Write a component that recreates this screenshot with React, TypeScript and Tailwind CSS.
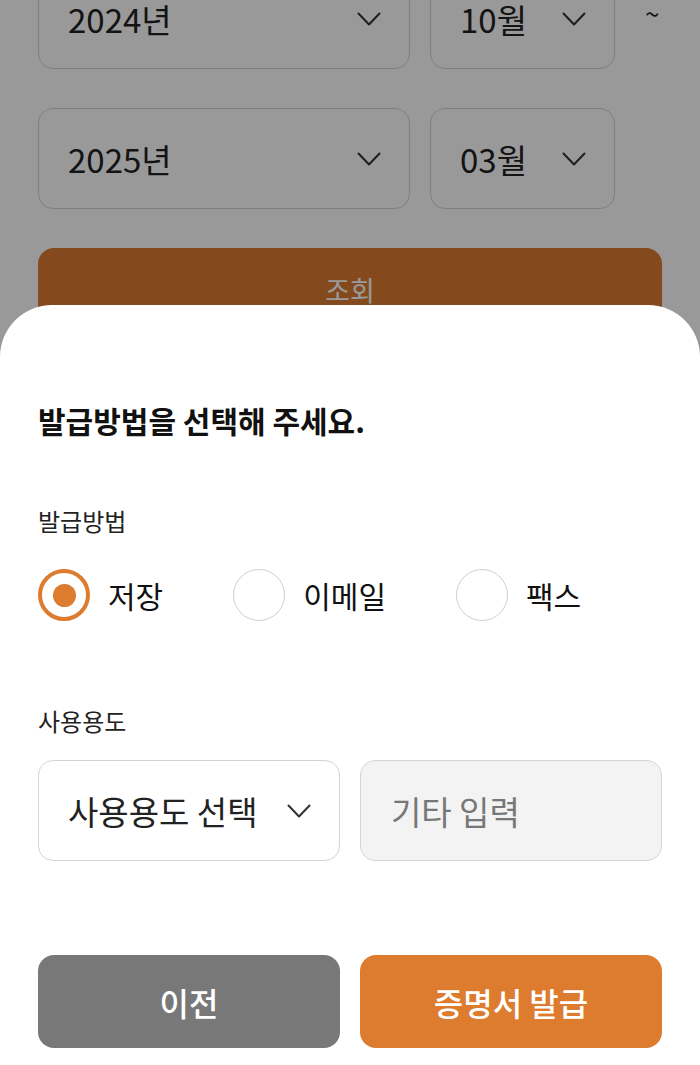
import { useState } from "react";

function Chevron({ className = "" }: { className?: string }) {
  return (
    <svg
      width="24"
      height="14"
      viewBox="0 0 24 14"
      fill="none"
      stroke="currentColor"
      strokeWidth="2"
      strokeLinecap="round"
      strokeLinejoin="round"
      className={className}
    >
      <polyline points="1.5,1.5 12,12.5 22.5,1.5" />
    </svg>
  );
}

function SelectBox({ label, className = "" }: { label: string; className?: string }) {
  return (
    <div
      className={`flex items-center justify-between rounded-[15px] border-[1.5px] border-[#d4d4d4] bg-white pl-[29px] pr-[28px] ${className}`}
    >
      <span className="text-[33px] leading-[34px] text-[#222]">{label}</span>
      <Chevron className="text-[#333]" />
    </div>
  );
}

function Radio({ label, checked, onClick }: { label: string; checked: boolean; onClick: () => void }) {
  return (
    <button type="button" onClick={onClick} className="flex items-center gap-[18px]">
      {checked ? (
        <span className="flex h-[52px] w-[52px] items-center justify-center rounded-full border-4 border-[#dd7b2f] bg-white">
          <span className="h-[23px] w-[23px] rounded-full bg-[#dd7b2f]" />
        </span>
      ) : (
        <span className="h-[52px] w-[52px] rounded-full border-[1.5px] border-[#cfcfcf] bg-white" />
      )}
      <span className="text-[30px] leading-[36px] text-[#111]">{label}</span>
    </button>
  );
}

export default function App() {
  const [method, setMethod] = useState("저장");

  return (
    <div className="relative h-[1065px] w-[700px] overflow-hidden bg-white font-['Noto_Sans_CJK_KR',sans-serif]">
      {/* page behind the sheet */}
      <div className="-mt-[32px] px-[38px]">
        <div className="flex items-center gap-[20px]">
          <SelectBox label="2024년" className="h-[101px] w-[372px]" />
          <SelectBox label="10월" className="h-[101px] w-[185px]" />
          <span className="-mt-[12px] ml-[10px] text-[26px] leading-[30px] text-[#222]">~</span>
        </div>
        <div className="mt-[39px] flex items-center gap-[20px]">
          <SelectBox label="2025년" className="h-[101px] w-[372px]" />
          <SelectBox label="03월" className="h-[101px] w-[185px]" />
        </div>
        <button
          type="button"
          className="mt-[39px] flex h-[84px] w-[624px] items-center justify-center rounded-[16px] bg-[#dd7b2f] text-[27px] text-white"
        >
          조회
        </button>
      </div>

      {/* dim overlay */}
      <div className="absolute inset-0 bg-black/40" />

      {/* bottom sheet */}
      <div className="absolute inset-x-0 bottom-0 h-[760px] rounded-t-[52px] bg-white px-[38px] pt-[97px]">
        <h2 className="text-[30px] font-bold leading-[36px] text-[#111]">발급방법을 선택해 주세요.</h2>

        <p className="mt-[68px] text-[24px] leading-[30px] text-[#222]">발급방법</p>
        <div className="mt-[33px] flex items-center gap-[70px]">
          {["저장", "이메일", "팩스"].map((m) => (
            <Radio key={m} label={m} checked={method === m} onClick={() => setMethod(m)} />
          ))}
        </div>

        <p className="mt-[85px] text-[24px] leading-[30px] text-[#222]">사용용도</p>
        <div className="mt-[24px] flex gap-[20px]">
          <SelectBox label="사용용도 선택" className="h-[101px] w-[302px]" />
          <input
            type="text"
            placeholder="기타 입력"
            className="h-[101px] w-[302px] rounded-[15px] border-[1.5px] border-[#d4d4d4] bg-[#f3f3f3] pl-[30px] text-[33px] text-[#222] outline-none placeholder:text-[#777]"
          />
        </div>

        <div className="mt-[94px] flex gap-[20px]">
          <button
            type="button"
            className="flex h-[93px] w-[302px] items-center justify-center rounded-[16px] bg-[#787878] text-[32px] font-medium text-white"
          >
            이전
          </button>
          <button
            type="button"
            className="flex h-[93px] w-[302px] items-center justify-center rounded-[16px] bg-[#dd7b2f] text-[32px] font-medium text-white"
          >
            증명서 발급
          </button>
        </div>
      </div>
    </div>
  );
}
